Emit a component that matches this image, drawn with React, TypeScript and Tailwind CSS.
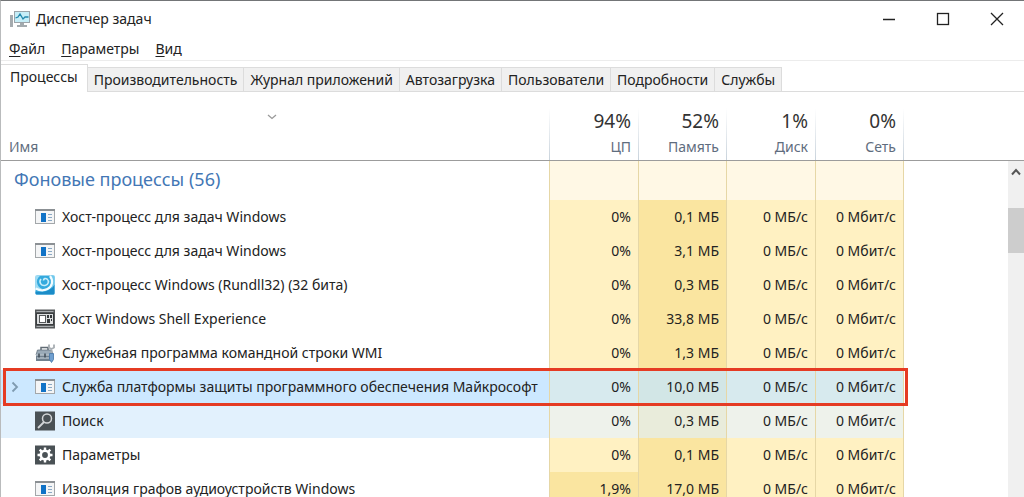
import type { ReactNode } from 'react'
import clsx from 'clsx'

type IconName = 'app' | 'rundll' | 'shell' | 'wmi' | 'search' | 'settings'

interface ProcessItem {
  id: number
  name: string
  icon: IconName
  cpu: string
  memory: string
  state?: 'selected' | 'hover'
}

const TABS = [
  'Процессы',
  'Производительность',
  'Журнал приложений',
  'Автозагрузка',
  'Пользователи',
  'Подробности',
  'Службы',
]

const MENU = ['Файл', 'Параметры', 'Вид']

const COLUMNS = [
  { label: 'ЦП', total: '94%' },
  { label: 'Память', total: '52%' },
  { label: 'Диск', total: '1%' },
  { label: 'Сеть', total: '0%' },
]

const PROCESSES: ProcessItem[] = [
  { id: 1, name: 'Хост-процесс для задач Windows', icon: 'app', cpu: '0%', memory: '0,1 МБ' },
  { id: 2, name: 'Хост-процесс для задач Windows', icon: 'app', cpu: '0%', memory: '3,1 МБ' },
  { id: 3, name: 'Хост-процесс Windows (Rundll32) (32 бита)', icon: 'rundll', cpu: '0%', memory: '0,3 МБ' },
  { id: 4, name: 'Хост Windows Shell Experience', icon: 'shell', cpu: '0%', memory: '33,8 МБ' },
  { id: 5, name: 'Служебная программа командной строки WMI', icon: 'wmi', cpu: '0%', memory: '1,3 МБ' },
  {
    id: 6,
    name: 'Служба платформы защиты программного обеспечения Майкрософт',
    icon: 'app',
    cpu: '0%',
    memory: '10,0 МБ',
    state: 'selected',
  },
  { id: 7, name: 'Поиск', icon: 'search', cpu: '0%', memory: '0,3 МБ', state: 'hover' },
  { id: 8, name: 'Параметры', icon: 'settings', cpu: '0%', memory: '0,1 МБ' },
  { id: 9, name: 'Изоляция графов аудиоустройств Windows', icon: 'app', cpu: '1,9%', memory: '17,0 МБ' },
]

const ICONS: Record<IconName, ReactNode> = {
  app: (
    <>
      <rect x="0.5" y="2.5" width="19" height="14" fill="#f4f5f6" stroke="#a3a7aa" />
      <rect x="0" y="2" width="20" height="2" fill="#8b9094" />
      <rect x="6" y="6" width="5" height="9" fill="#1072c6" />
      <path d="M13 7.5h4M13 10.5h4M13 13.5h4" stroke="#8ba9c4" />
    </>
  ),
  rundll: (
    <>
      <rect x="0.5" y="0.5" width="19" height="19" rx="1.5" fill="#35aade" />
      <path d="M0.5 0.5h5C2 3 1 6 2.500 9.500c1 2.500 3 4 5 4.500H0.5z" fill="#9fdcf4" />
      <path d="M15 .5h4.500V9c-.5 3-2 5.500-4 7 2.500-5 3-10-.5-15.500z" fill="#6fc8ec" />
      <path d="M6 4c-2.500 3 0 7 4 6.500 3.500-.5 4.500-4.500 2-6.500-1.500-1-3.500-.5-3.500 1.500" fill="none" stroke="#c9edfa" strokeWidth="1.600" />
      <path d="M15 1c3.500 4.500 2.500 10.500-2.500 13-3.500 1.800-8 1.500-12-.5" fill="none" stroke="#f3fcff" strokeWidth="2.200" />
      <path d="M0.500 16.500c8 2 16-1 19-7v9q0 1-1 1h-17q-1 0-1-1z" fill="#1b8cc8" />
    </>
  ),
  shell: (
    <>
      <rect x="0" y="0.500" width="20" height="19" fill="#55585a" />
      <path d="M1.500 2.500h17M1.500 17.500h17" stroke="#a9adb0" />
      <rect x="1.500" y="4.500" width="17" height="11" fill="#dcdedf" stroke="#3a3d3f" />
      <rect x="4.500" y="6.500" width="6" height="7" fill="#fff" stroke="#55585a" />
      <path d="M12 6h2v3h-2zM15 6h2v3h-2zM12 10h3v4h-3zM16 10h1v2h-1z" fill="#35393b" />
    </>
  ),
  wmi: (
    <>
      <path d="M6 7V4.500h7V7" fill="none" stroke="#626c75" strokeWidth="1.500" />
      <path d="M2.500 7h14l1.500 5H1z" fill="#9babb8" stroke="#647480" strokeWidth="0.800" />
      <path d="M1 12h17v6H1z" fill="#71818f" />
      <path d="M1 12h17M2 15h12" stroke="#d2dce3" />
      <path d="M4 10.500v4M10 10.500v4" stroke="#3f4b55" strokeWidth="1.500" />
      <path d="M14 1.500v3l2.500 1.500L19 4.500v-3M16.500 5.500v5" fill="none" stroke="#a7adb2" strokeWidth="1.800" />
      <path d="M14.500 10.500h4v6l-2 3-2-3z" fill="#6f9fd0" stroke="#4676a7" strokeWidth="0.800" />
    </>
  ),
  search: (
    <>
      <rect x="0" y="0.500" width="20" height="19" fill="#4a5155" />
      <circle cx="12" cy="7.500" r="4.500" fill="none" stroke="#d3d6d8" strokeWidth="1.500" />
      <path d="M9 11l-6 6" stroke="#d3d6d8" strokeWidth="1.800" />
    </>
  ),
  settings: (
    <>
      <rect x="0" y="0.500" width="20" height="19" fill="#4a5155" />
      <circle cx="10" cy="10" r="4.200" fill="none" stroke="#fff" strokeWidth="2.600" />
      <path
        d="M10 2.500v3M10 14.500v3M2.500 10h3M14.500 10h3M4.700 4.700l2 2M13.300 13.300l2 2M15.300 4.700l-2 2M6.700 13.300l-2 2"
        stroke="#fff"
        strokeWidth="2.400"
      />
    </>
  ),
}

function ProcessIcon({ name }: { name: IconName }) {
  return (
    <svg viewBox="0 0 20 20" className="h-5 w-5 shrink-0" aria-hidden="true">
      {ICONS[name]}
    </svg>
  )
}

function AppLogo() {
  return (
    <svg viewBox="0 0 20 18" className="h-[18px] w-5 shrink-0" aria-hidden="true">
      <rect x="0" y="5" width="3" height="12" fill="#a5abaf" />
      <rect x="4.500" y="1.500" width="15" height="11" fill="#c5edf7" stroke="#9aa4aa" />
      <path d="M5.500 8l2.500-1 2-3 3 5 2-2h3.500" fill="none" stroke="#2187ac" strokeWidth="1.300" />
      <path d="M10 13h4v2h3v2H7v-2h3z" fill="#a3aaae" />
    </svg>
  )
}

// value cells: base tint by column, recoloured for the selected and hovered rows
function cellColor(heavy: boolean, state?: ProcessItem['state']) {
  if (state === 'selected') return heavy ? 'bg-[#d2e6e6]' : 'bg-[#d7eaee]'
  if (state === 'hover') return heavy ? 'bg-[#e9ecdb]' : 'bg-[#eef2eb]'
  return heavy ? 'bg-[#fae5a0]' : 'bg-[#fff1c2]'
}

function ValueCell({ heavy = false, state, children }: { heavy?: boolean; state?: ProcessItem['state']; children: ReactNode }) {
  return (
    <td className={clsx('border-r border-[#e6d7a6] pr-[7px] text-right', cellColor(heavy, state))}>
      {children}
    </td>
  )
}

function ProcessRow({ item }: { item: ProcessItem }) {
  const selected = item.state === 'selected'
  return (
    <tr className={clsx('relative h-[34px]', selected && 'z-10')}>
      <td
        className={clsx(
          'border-r border-[#e6d7a6]',
          selected && 'bg-[#cce8ff]',
          item.state === 'hover' && 'bg-[#e2f1fd]',
        )}
      >
        <div className="flex items-center">
          <span className="flex w-[34px] shrink-0 items-center pl-[10px]">
            {selected && (
              <svg viewBox="0 0 8 12" className="h-3 w-2" aria-hidden="true">
                <path d="M1.500 1.500L6 6l-4.500 4.500" fill="none" stroke="#7f9bb0" strokeWidth="1.800" />
              </svg>
            )}
          </span>
          <ProcessIcon name={item.icon} />
          <span className="ml-[7px]">{item.name}</span>
        </div>
        {selected && <div className="absolute inset-y-[-2px] left-[2px] right-[100px] border-[3px] border-[#e53b23]" />}
      </td>
      <ValueCell heavy={item.cpu !== '0%'} state={item.state}>
        {item.cpu}
      </ValueCell>
      <ValueCell heavy state={item.state}>
        {item.memory}
      </ValueCell>
      <ValueCell state={item.state}>0 МБ/с</ValueCell>
      <ValueCell state={item.state}>0 Мбит/с</ValueCell>
      <td />
    </tr>
  )
}

export default function App() {
  return (
    <div className="flex h-screen flex-col overflow-hidden border-l border-t border-l-[#b9bbbc] border-t-[#737577] bg-white font-['Noto_Sans','Open_Sans',sans-serif] text-sm text-[#222]">
      {/* title bar */}
      <header className="flex h-9 shrink-0 items-center justify-between pl-[9px]">
        <div className="flex items-center gap-[6px]">
          <AppLogo />
          <h1>Диспетчер задач</h1>
        </div>
        <div className="flex">
          <button type="button" aria-label="Свернуть" className="flex h-9 w-[54px] items-center justify-center">
            <svg viewBox="0 0 14 14" className="h-[14px] w-[14px]">
              <path d="M1 7.500h12" stroke="#222" strokeWidth="1.500" />
            </svg>
          </button>
          <button type="button" aria-label="Развернуть" className="flex h-9 w-[54px] items-center justify-center">
            <svg viewBox="0 0 14 14" className="h-[14px] w-[14px]">
              <rect x="1.500" y="1.500" width="11" height="11" fill="none" stroke="#222" strokeWidth="1.300" />
            </svg>
          </button>
          <button type="button" aria-label="Закрыть" className="flex h-9 w-[54px] items-center justify-center">
            <svg viewBox="0 0 14 14" className="h-[14px] w-[14px]">
              <path d="M1 1l12 12M13 1L1 13" stroke="#222" strokeWidth="1.300" />
            </svg>
          </button>
        </div>
      </header>

      <nav className="flex h-6 shrink-0 items-center gap-4 border-b border-[#ececec] pl-2">
        {MENU.map((item) => (
          <button key={item} type="button">
            <span className="underline underline-offset-2">{item[0]}</span>
            {item.slice(1)}
          </button>
        ))}
      </nav>

      <div role="tablist" className="flex h-[31px] shrink-0 items-end border-b border-[#dcdcdc]">
        {TABS.map((tab, i) => (
          <button
            key={tab}
            type="button"
            role="tab"
            aria-selected={i === 0}
            className={clsx(
              'border-r border-t border-[#dcdcdc]',
              i === 0 ? '-mb-px h-[28px] bg-white px-[9px] pb-1' : 'h-6 bg-[#f0f0f0] px-[6px]',
            )}
          >
            {tab}
          </button>
        ))}
      </div>

      <main className="flex min-h-0 flex-1">
        <table className="h-fit flex-1 table-fixed border-separate border-spacing-0">
          <colgroup>
            <col />
            <col className="w-[89px]" />
            <col className="w-[88px]" />
            <col className="w-[89px]" />
            <col className="w-[88px]" />
            <col className="w-[104px]" />
          </colgroup>
          <thead>
            <tr className="h-[69px]">
              <th className="border-b border-[#9c9c9c] bg-[linear-gradient(to_bottom,transparent_16px,#c9d3dc)] bg-[length:1px_100%] bg-right bg-no-repeat pb-[3px] pl-2 pr-4 text-left align-bottom font-normal text-[#5f6d7e]">
                <svg viewBox="0 0 10 6" className="mx-auto mb-[17px] h-[6px] w-[10px]" aria-hidden="true">
                  <path d="M1 1l4 3.500L9 1" fill="none" stroke="#9a9a9a" strokeWidth="1.300" />
                </svg>
                Имя
              </th>
              {COLUMNS.map((col) => (
                <th
                  key={col.label}
                  className="border-b border-[#9c9c9c] bg-[linear-gradient(to_bottom,transparent_16px,#c9d3dc)] bg-[length:1px_100%] bg-right bg-no-repeat pb-[3px] pr-2 text-right align-bottom font-normal"
                >
                  <div className="text-[19px] leading-8 text-[#333]">{col.total}</div>
                  <div className="text-[#5f6d7e]">{col.label}</div>
                </th>
              ))}
              <td className="border-b border-[#9c9c9c]" />
            </tr>
          </thead>
          <tbody>
            <tr className="h-[39px]">
              <th className="border-r border-[#e6d7a6] pb-[3px] pl-[13px] text-left text-lg font-normal text-[#4377b5]">
                Фоновые процессы (56)
              </th>
              {COLUMNS.map((col) => (
                <td key={col.label} className="border-r border-[#e6d7a6] bg-[#fff8e5]" />
              ))}
              <td />
            </tr>
            {PROCESSES.map((item) => (
              <ProcessRow key={item.id} item={item} />
            ))}
          </tbody>
        </table>

        {/* scrollbar */}
        <div className="flex w-4 shrink-0 flex-col">
          <div className="h-[69px] shrink-0 border-b border-[#9c9c9c]" />
          <div className="flex flex-1 flex-col bg-[#f0f0f0]">
            <button type="button" aria-label="Прокрутить вверх" className="flex h-[22px] items-center justify-center">
              <svg viewBox="0 0 10 8" className="h-2 w-[10px]">
                <path d="M1 6.500L5 2l4 4.500" fill="none" stroke="#555" strokeWidth="2" />
              </svg>
            </button>
            <div className="mt-[25px] h-[45px] bg-[#cdcdcd]" />
          </div>
        </div>
      </main>
    </div>
  )
}
